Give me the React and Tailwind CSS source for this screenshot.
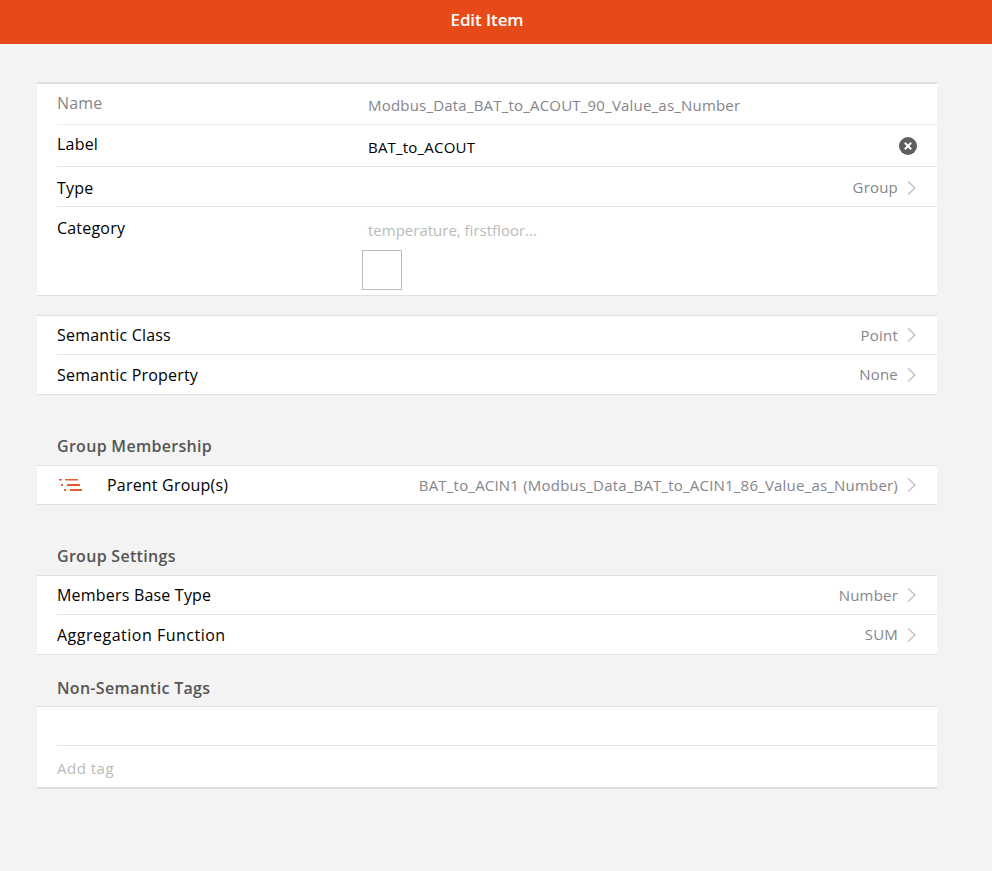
import React from 'react';

const Chevron = () => (
  <svg width="10" height="16" viewBox="0 0 10 16" className="ml-[9px] shrink-0" fill="none">
    <path d="M1.2 1.5L7.8 8l-6.6 6.5" stroke="#c7c7cc" strokeWidth="1.7" />
  </svg>
);

const ClearIcon = () => (
  <svg width="18" height="18" viewBox="0 0 18 18">
    <circle cx="9" cy="9" r="9" fill="#5f5f5f" />
    <path d="M5.8 5.8l6.4 6.4M12.2 5.8l-6.4 6.4" stroke="#fff" strokeWidth="2" />
  </svg>
);

const ListIcon = () => (
  <svg width="26" height="14" viewBox="0 0 26 14" fill="#e8592b" className="block">
    <rect x="2" y="1" width="3" height="1.5" />
    <rect x="8" y="1" width="13" height="1.5" />
    <rect x="4" y="6" width="2" height="2" />
    <rect x="10" y="6" width="13" height="2" />
    <rect x="7" y="11" width="2" height="2" />
    <rect x="13" y="11" width="12" height="2" />
  </svg>
);

const Row = ({ label, value, last, tall, labelClass }) => (
  <div className={`flex items-center justify-between pr-5 ${tall ? 'h-[40px] pt-[2px]' : 'h-[39px]'} ${last ? '' : 'border-b border-[#e5e5e5]'}`}>
    <span className={`text-[16px] text-black ${labelClass || ''}`}>{label}</span>
    <span className="flex items-center text-[15px] text-[#85858a]">
      {value}
      <Chevron />
    </span>
  </div>
);

const SectionTitle = ({ children, className }) => (
  <div className={`pl-5 text-[16px] font-semibold tracking-[0.3px] text-[#555] ${className}`}>{children}</div>
);

export default function App() {
  return (
    <div className="min-h-[871px] bg-[#f3f3f3] font-['Open_Sans','Noto_Sans',sans-serif] tracking-[0.2px]">
      <div className="h-[44px] bg-[#e64a19] flex items-center justify-center pr-[18px] pb-[4px] text-white text-[17px] tracking-[-0.1px] font-semibold">
        Edit Item
      </div>

      <div className="w-[900px] ml-[37px] pt-[38px]">
        <div className="bg-white border-t-2 border-[#e0e0e0] border-b">
          <div className="pl-5">
            <div className="flex h-[41px] border-b border-[#eee]">
              <span className="w-[311px] pt-[7px] text-[16px] text-[#85858a]">Name</span>
              <span className="pt-[10px] text-[15px] text-[#85858a]">Modbus_Data_BAT_to_ACOUT_90_Value_as_Number</span>
            </div>
            <div className="flex h-[42px] border-b border-[#e5e5e5] pr-5">
              <span className="w-[311px] pt-[7px] text-[16px] text-black">Label</span>
              <span className="pt-[11px] text-[15px] text-black flex-1">BAT_to_ACOUT</span>
              <span className="pt-[12px]"><ClearIcon /></span>
            </div>
            <Row label="Type" value="Group" tall />
            <div className="flex h-[88px]">
              <span className="w-[305px] pt-[9px] text-[16px] text-black">Category</span>
              <div>
                <div className="pl-[6px] pt-[12px] text-[15px] tracking-normal text-[#bbb]">temperature, firstfloor...</div>
                <div className="mt-[8px] w-[40px] h-[40px] border border-[#bdbdbd]"></div>
              </div>
            </div>
          </div>
        </div>

        <div className="mt-[19px] bg-white border-y border-[#e0e0e0] pl-5">
          <Row label="Semantic Class" value="Point" />
          <Row label="Semantic Property" value="None" last />
        </div>

        <SectionTitle className="mt-[40px] h-[30px] -translate-y-[1px]">Group Membership</SectionTitle>
        <div className="bg-white border-y border-[#e0e0e0] h-[40px] flex items-center pl-5 pr-5">
          <span className="w-[50px]"><ListIcon /></span>
          <span className="text-[16px] text-black flex-1">Parent Group(s)</span>
          <span className="flex items-center text-[15px] text-[#85858a]">
            BAT_to_ACIN1 (Modbus_Data_BAT_to_ACIN1_86_Value_as_Number)
            <Chevron />
          </span>
        </div>

        <SectionTitle className="mt-[40px] h-[30px] -translate-y-[1px]">Group Settings</SectionTitle>
        <div className="bg-white border-y border-[#e0e0e0] pl-5">
          <Row label="Members Base Type" value="Number" />
          <Row label="Aggregation Function" value="SUM" last labelClass="tracking-[0.5px]" />
        </div>

        <SectionTitle className="mt-[21px] h-[30px]">Non-Semantic Tags</SectionTitle>
        <div className="bg-white border-t border-[#e0e0e0] border-b-2">
          <div className="pl-5">
            <div className="h-[39px] border-b border-[#e5e5e5]"></div>
            <div className="h-[41px] pt-[11px] text-[15px] tracking-[0.5px] text-[#bbb]">Add tag</div>
          </div>
        </div>
      </div>
    </div>
  );
}
